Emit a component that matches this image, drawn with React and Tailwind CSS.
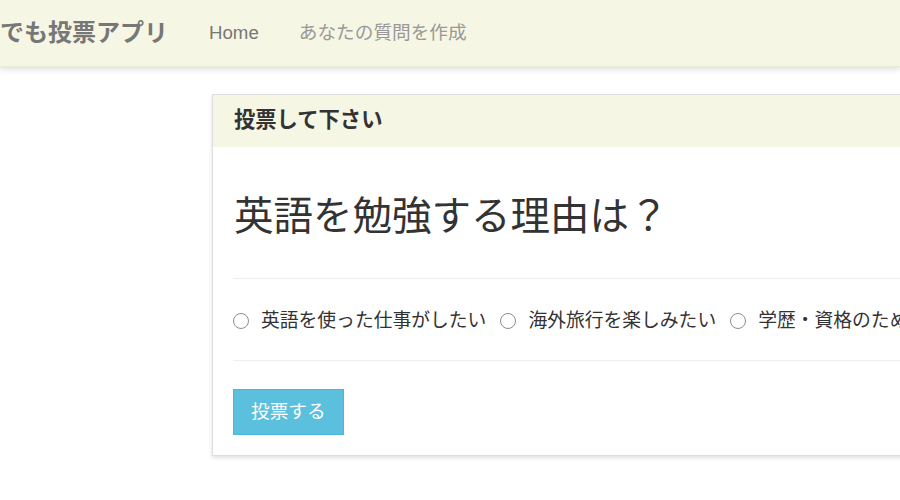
const font = { fontFamily: '"Liberation Sans", "Noto Sans CJK JP", sans-serif' };

const choices = ['英語を使った仕事がしたい', '海外旅行を楽しみたい', '学歴・資格のために'];

const App = () => {
  return (
    <div className="w-[900px] h-[500px] overflow-hidden bg-white text-[#333]" style={font}>
      {/* navbar */}
      <nav className="h-[67px] bg-[#f6f6e4] border-b border-[#ebebd6] shadow-[0_2px_6px_rgba(0,0,0,0.15)] flex items-center whitespace-nowrap">
        <span className="text-[24px] font-bold text-[#777] pr-[21px]">でも投票アプリ</span>
        <a className="text-[18.67px] text-[#777] px-[20px]">Home</a>
        <a className="text-[18.67px] text-[#999] px-[20px]">あなたの質問を作成</a>
      </nav>

      {/* vote panel */}
      <div className="ml-[212px] mt-[27px] w-[1000px] border border-[#ddd] bg-white shadow-[0_2px_4px_rgba(0,0,0,0.12)]">
        <div className="h-[52px] bg-[#f6f6e4] px-[21px] flex items-center">
          <h3 className="text-[21.3px] font-bold text-[#333]">投票して下さい</h3>
        </div>
        <div className="px-[20px] pt-[20px] pb-[20px]">
          <h2 className="mt-[27px] text-[39.5px] leading-[44px] text-[#333] pl-[1px]">英語を勉強する理由は？</h2>
          <hr className="border-t border-[#eee] mt-[40px] mb-[27px]" />
          <div className="flex items-center h-[30px] text-[18.8px] whitespace-nowrap">
            {choices.map((c, i) => (
              <label key={c} className={`flex items-center ${i > 0 ? 'ml-[14px]' : ''}`}>
                <span className="w-[16px] h-[16px] rounded-full border-[1.5px] border-[#8d8d8d] bg-white" />
                <span className="ml-[12px]">{c}</span>
              </label>
            ))}
          </div>
          <hr className="border-t border-[#eee] mt-[24px] mb-[28px]" />
          <button className="h-[46px] px-[17px] bg-[#5bc0de] border border-[#46b8da] text-white text-[18.67px]">投票する</button>
        </div>
      </div>
    </div>
  );
};

export default App;
